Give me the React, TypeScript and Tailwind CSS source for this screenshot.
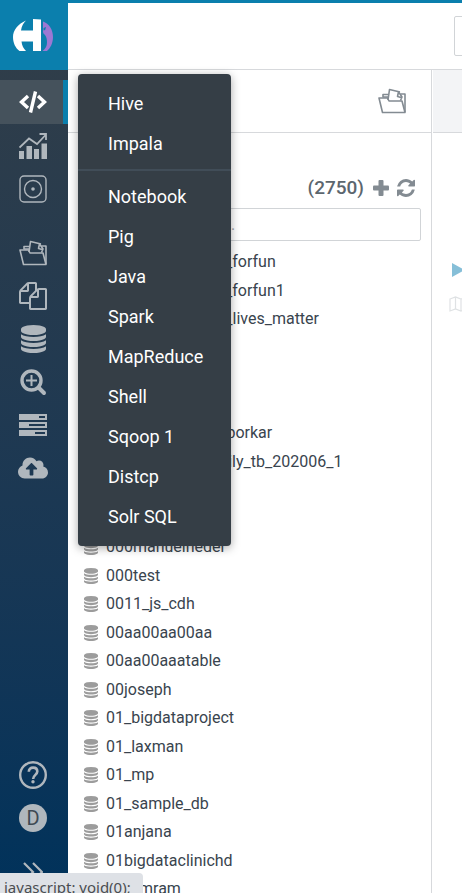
import type { ReactNode } from "react";
import { FaCloudUploadAlt } from "react-icons/fa";

const DATABASE_PATH =
  "M768 768q237 0 443-43t325-127v170q0 69-103 128t-280 93.5-385 34.5-385-34.5-280-93.5-103-128v-170q119 84 325 127t443 43zm0 768q237 0 443-43t325-127v170q0 69-103 128t-280 93.5-385 34.5-385-34.5-280-93.5-103-128v-170q119 84 325 127t443 43zm0-384q237 0 443-43t325-127v170q0 69-103 128t-280 93.5-385 34.5-385-34.5-280-93.5-103-128v-170q119 84 325 127t443 43zm0-1152q208 0 385 34.5t280 93.5 103 128v128q0 69-103 128t-280 93.5-385 34.5-385-34.5-280-93.5-103-128v-128q0-69 103-128t280-93.5 385-34.5z";

function DatabaseIcon({ className }: { className: string }) {
  return (
    <svg viewBox="0 0 1536 1792" preserveAspectRatio="none" fill="currentColor" className={className} aria-hidden="true">
      <path d={DATABASE_PATH} />
    </svg>
  );
}

function FolderIcon() {
  return (
    <svg viewBox="0 0 28 26" width="28" height="26" fill="none" stroke="currentColor" strokeWidth="1.6" strokeLinejoin="round" aria-hidden="true">
      <path d="M1 10h8.500l1.500 3h13l3 11.500H4.500z" />
      <path d="M5 9.500V6.500h5.500M5 9h5" />
      <path d="M10 12l1.500-10.500 10.500 2.500" />
      <path d="M20.500 4l-1 4.500 4.500 1.200M21 4.500l3 4.500-1.500 3.500" />
      <path d="M22.500 6h4.500v18" />
    </svg>
  );
}

function Logo() {
  return (
    <svg viewBox="13 19 40 32" width="40" height="32" aria-hidden="true">
      <path fill="#fff" d="M26 20.500C18 24 13 30 13 37c0 6 2.500 11 6.500 14H26c-2.500-2.500-4-5-4.500-9.500H33V51h8V19.500L33 19v11.500H21C21.500 26 23.500 23 26 20.500z" />
      <path fill="#9b78d3" d="M43 21.500c6 2 10 8 10 15.500 0 6-2.500 11-6 14h-4.500c3-2 4.500-5 4.500-8.500 0-3-.5-6-2-7.500-1-1-2-1.500-2-3.500z" />
      <path fill="#0b7fad" d="M43.500 28l2.500-1-.8 3-1.700.5z" />
    </svg>
  );
}

const icons = {
  editor: (
    <svg viewBox="0 0 28 22" width="28" height="22" fill="none" stroke="currentColor" strokeWidth="3.400" aria-hidden="true">
      <path d="M9 5L2.500 11 9 17M19 5l6.500 6-6.500 6M16.500.5l-5 21" />
    </svg>
  ),
  dashboard: (
    <svg viewBox="0 0 28 26" width="28" height="26" fill="none" stroke="currentColor" aria-hidden="true">
      <path fill="currentColor" stroke="none" d="M0 18h5v8H0zM7.500 13h5.500v13H7.500zM15 16h5v10h-5zM22.500 10.500H28V26h-5.500z" />
      <path strokeWidth="1.800" d="M.5 14.500L10 5.500l8 5.500 9-9.500M20.500 1h6.500v6" />
    </svg>
  ),
  scheduler: (
    <svg viewBox="0 0 28 28" width="28" height="28" fill="none" stroke="currentColor" strokeWidth="1.400" aria-hidden="true">
      <rect x="1" y="1" width="26" height="26" rx="4" />
      <circle cx="14" cy="14" r="8.500" />
      <circle cx="14" cy="14" r="1.800" fill="currentColor" stroke="none" />
    </svg>
  ),
  documents: <FolderIcon />,
  files: (
    <svg viewBox="0 0 1792 1792" width="28" height="28" fill="currentColor" aria-hidden="true">
      <path d="M1696 384q40 0 68 28t28 68v1216q0 40-28 68t-68 28h-960q-40 0-68-28t-28-68v-288h-544q-40 0-68-28t-28-68v-672q0-40 20-88t48-76l408-408q28-28 76-48t88-20h416q40 0 68 28t28 68v328q68-40 128-40h416zm-544 213l-299 299h299v-299zm-640-384l-299 299h299v-299zm196 647l316-316v-416h-384v416q0 40-28 68t-68 28h-416v640h512v-256q0-40 20-88t48-76zm956 804v-1152h-384v416q0 40-28 68t-68 28h-416v640h896z" />
    </svg>
  ),
  tables: <DatabaseIcon className="h-7 w-[25px]" />,
  indexes: (
    <svg viewBox="0 0 28 28" width="28" height="28" fill="none" stroke="currentColor" aria-hidden="true">
      <circle cx="12.500" cy="12.500" r="9.500" strokeWidth="3.400" />
      <path strokeWidth="2" d="M12.500 7v11M7 12.500h11" />
      <path strokeWidth="4" strokeLinecap="round" d="M20 20l5 5" />
    </svg>
  ),
  jobs: (
    <svg viewBox="0 0 28 22" width="28" height="22" fill="currentColor" fillRule="evenodd" aria-hidden="true">
      <path d="M0 0h28v6H0zM20 2v2h6V2zM0 8h28v6H0zM10 10v2h16v-2zM0 16h28v6H0zM16 18v2h10v-2z" />
    </svg>
  ),
  importer: <FaCloudUploadAlt className="h-6 w-[30px]" aria-hidden="true" />,
  help: (
    <svg viewBox="0 0 28 28" width="28" height="28" fill="none" stroke="currentColor" aria-hidden="true">
      <circle cx="14" cy="14" r="12.800" strokeWidth="2.400" />
      <path strokeWidth="2.600" d="M9.800 10.800c0-2.600 1.800-4.200 4.300-4.200s4.200 1.500 4.200 3.900c0 3.300-4.200 3.500-4.200 7.500" />
      <circle cx="14" cy="20.800" r="1.700" fill="currentColor" stroke="none" />
    </svg>
  ),
  expand: (
    <svg viewBox="0 0 20 20" width="20" height="20" fill="none" stroke="currentColor" strokeWidth="2.200" aria-hidden="true">
      <path d="M1 1l9 9-9 9M10 1l9 9-9 9" />
    </svg>
  ),
};

function NavButton({ label, className = "", children }: { label: string; className?: string; children: ReactNode }) {
  return (
    <button type="button" aria-label={label} className={`flex h-[43px] w-full shrink-0 items-center justify-center pr-[2px] ${className}`}>
      {children}
    </button>
  );
}

function Sidebar() {
  return (
    <nav className="flex w-[68px] shrink-0 flex-col bg-linear-to-b from-[#323e48] to-[#00325b] text-[#b0b7bd]">
      <a href="#home" aria-label="Hue" className="flex h-[70px] shrink-0 items-center justify-center bg-[#0b7fad] pr-[2px]">
        <Logo />
      </a>
      <div className="flex flex-col pt-[10px]">
        <button type="button" aria-label="Editor" className="flex h-11 items-center justify-center border-r-[5px] border-[#0b7fad] bg-[#45525c] pl-[3px] text-white">
          {icons.editor}
        </button>
        <NavButton label="Dashboard">{icons.dashboard}</NavButton>
        <NavButton label="Scheduler">{icons.scheduler}</NavButton>
      </div>
      <div className="flex flex-col pt-[21px]">
        <NavButton label="Documents">{icons.documents}</NavButton>
        <NavButton label="Files">{icons.files}</NavButton>
        <NavButton label="Tables">{icons.tables}</NavButton>
        <NavButton label="Indexes">{icons.indexes}</NavButton>
        <NavButton label="Jobs">{icons.jobs}</NavButton>
        <NavButton label="Importer">{icons.importer}</NavButton>
      </div>
      <div className="mt-auto flex flex-col">
        <NavButton label="Help">{icons.help}</NavButton>
        <NavButton label="User">
          <span className="flex size-7 items-center justify-center rounded-full bg-[#b0b7bd] text-xl leading-7 text-[#3f4a53]">D</span>
        </NavButton>
        <NavButton label="Expand" className="mt-[11px]">{icons.expand}</NavButton>
      </div>
    </nav>
  );
}

const editors = ["Hive", "Impala"];
const moreEditors = ["Notebook", "Pig", "Java", "Spark", "MapReduce", "Shell", "Sqoop 1", "Distcp", "Solr SQL"];

function MenuLink({ name }: { name: string }) {
  return (
    <li>
      <a href="#editor" className="block pl-[30px] text-lg leading-10 text-white">{name}</a>
    </li>
  );
}

function EditorMenu() {
  return (
    <div className="absolute top-[74px] left-[78px] z-10 w-[153px] rounded bg-[#353e46] pt-[10px] pb-[9px] shadow-[0_2px_10px_rgba(0,0,0,0.35)]">
      <ul>{editors.map((n) => <MenuLink key={n} name={n} />)}</ul>
      <hr className="mt-[5px] mb-[6px] border-t-2 border-[#414d58]" />
      <ul>{moreEditors.map((n) => <MenuLink key={n} name={n} />)}</ul>
    </div>
  );
}

const databases = [
  "000_coding_only_forfun",
  "000_coding_only_forfun1",
  "0000_your_black_lives_matter",
  "0000",
  "0000_demo",
  "000_test",
  "00000_kumar_a_borkar",
  "000_products_daily_tb_202006_1",
  "000_sample",
  "000hello",
  "000manuelneder",
  "000test",
  "0011_js_cdh",
  "00aa00aa00aa",
  "00aa00aaatable",
  "00joseph",
  "01_bigdataproject",
  "01_laxman",
  "01_mp",
  "01_sample_db",
  "01anjana",
  "01bigdataclinichd",
  "01_iimram",
];

function AssistPanel() {
  return (
    <aside className="flex w-[364px] shrink-0 flex-col border-r border-[#d7d9dc]">
      <div className="flex h-[63px] shrink-0 items-center justify-end border-b border-[#d7d9dc] pr-[25px] text-[#838b92]">
        <button type="button" aria-label="Documents"><FolderIcon /></button>
      </div>
      <div className="flex h-[75px] shrink-0 items-end justify-end pr-4 pb-[6px] text-[#838b92]">
        <h2 className="mr-[9px] text-[19px] leading-7 font-medium text-[#5c666e]">(2750)</h2>
        <button type="button" aria-label="Create database" className="mr-2 flex h-7 items-center">
          <svg viewBox="0 0 16 16" width="16" height="16" fill="currentColor" aria-hidden="true">
            <rect x="5.500" y="0" width="5" height="16" rx="1" />
            <rect x="0" y="5.500" width="16" height="5" rx="1" />
          </svg>
        </button>
        <button type="button" aria-label="Refresh" className="flex h-7 items-center">
          <svg viewBox="0 128 1536 1536" width="18" height="18" fill="currentColor" aria-hidden="true">
            <path d="M1511 1056q0 5-1 7-64 268-268 434.500t-478 166.500q-146 0-282.500-55t-243.500-157l-129 129q-19 19-45 19t-45-19-19-45v-448q0-26 19-45t45-19h448q26 0 45 19t19 45-19 45l-137 137q71 66 161 102t187 36q134 0 250-65t186-179q11-17 53-117 8-23 30-23h192q13 0 22.500 9.500t9.500 22.500zm25-800v448q0 26-19 45t-45 19h-448q-26 0-45-19t-19-45 19-45l138-138q-148-137-349-137-134 0-250 65t-186 179q-11 17-53 117-8 23-30 23h-199q-13 0-22.500-9.500t-9.500-22.500v-7q65-268 270-434.500t480-166.500q146 0 284 55.500t245 156.500l130-129q19-19 45-19t45 19 19 45z" />
          </svg>
        </button>
      </div>
      <div className="shrink-0 pr-[10px] pl-4">
        <input
          type="text"
          aria-label="Filter databases"
          placeholder="Search databases..."
          className="block h-[33px] w-full rounded-xs border border-[#d1d4d7] px-[10px] text-base text-[#39444e] placeholder:text-[#9da3a8]"
        />
      </div>
      <ul className="pt-[7px] pl-4 text-[#39444e]">
        {databases.map((name) => (
          <li key={name} className="flex h-7 items-center even:h-[29px]">
            <DatabaseIcon className="mr-2 h-4 w-[14px] shrink-0 text-[#9c9c9c]" />
            <a href="#database" className="text-base leading-7 whitespace-nowrap">{name}</a>
          </li>
        ))}
      </ul>
    </aside>
  );
}

function Workspace() {
  return (
    <main className="min-w-0 flex-1 overflow-hidden pl-px">
      <div className="h-[63px] border-b border-[#d7d9dc] bg-[#f3f4f6]" />
      <div className="flex flex-col items-start pt-[130px] pl-4">
        <button type="button" aria-label="Execute" className="ml-[3px] text-[#86bfd8]">
          <svg viewBox="0 0 14 14" width="14" height="14" fill="currentColor" aria-hidden="true"><path d="M0 0l13 7-13 7z" /></svg>
        </button>
        <button type="button" aria-label="Explain" className="mt-[19px] text-[#dfe2e4]">
          <svg viewBox="0 0 18 16" width="18" height="16" fill="none" stroke="currentColor" strokeWidth="1.200" aria-hidden="true">
            <path d="M1 3l5.500-2 5.500 2 5-2v12l-5 2-5.500-2L1 15zM6.500 1v12M12 3v12" />
          </svg>
        </button>
      </div>
    </main>
  );
}

export default function App() {
  return (
    <div className="relative flex h-screen overflow-hidden bg-white font-[Roboto,sans-serif]">
      <Sidebar />
      <div className="flex min-w-0 flex-1 flex-col">
        <header className="flex h-[70px] shrink-0 items-center overflow-hidden border-t-[3px] border-b border-t-[#0b7fad] border-b-[#d7d9dc] pl-[386px]">
          <input type="text" aria-label="Search data and saved documents" className="h-10 w-80 shrink-0 rounded-xs border border-[#d1d4d7] px-3" />
        </header>
        <div className="flex min-h-0 flex-1">
          <AssistPanel />
          <Workspace />
        </div>
      </div>
      <EditorMenu />
      <div className="absolute bottom-0 left-0 z-10 h-5 w-[143px] overflow-hidden rounded-tr bg-[#dee1e6] pl-1 font-['Noto_Sans',sans-serif] text-[15px] leading-7 whitespace-nowrap text-[#4a4d51]">
        javascript: void(0);
      </div>
    </div>
  );
}
